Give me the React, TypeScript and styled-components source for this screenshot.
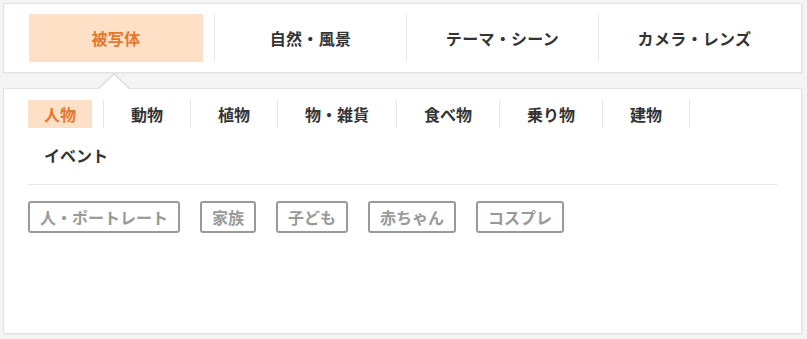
import React from "react";
import styled, { createGlobalStyle } from "styled-components";

const Global = createGlobalStyle`
  html, body { margin: 0; padding: 0; background: #f4f4f4; }
  body { font-family: "Noto Sans CJK JP", "Noto Sans", sans-serif; }
  * { box-sizing: border-box; }
`;

const Page = styled.div`
  padding: 3px 5px 5px 3px;
  display: flex;
  flex-direction: column;
  gap: 15px;
`;

const Panel = styled.div`
  position: relative;
  background: #fff;
  border: 1px solid #e3e3e3;
  box-shadow: 1px 1px 1px rgba(0, 0, 0, 0.04);
`;

const TopPanel = styled(Panel)`
  padding: 10px 25px;
`;

const MainTabs = styled.ul`
  list-style: none;
  margin: 0;
  padding: 0;
  display: flex;
`;

const MainTabItem = styled.li<{ $first?: boolean; $last?: boolean }>`
  padding: 0 ${(p) => (p.$last ? "0" : "11px")} 0 ${(p) => (p.$first ? "0" : "11px")};
  border-right: ${(p) => (p.$last ? "none" : "1px solid #e6e6e6")};
  display: flex;
`;

const MainTab = styled.a<{ $active?: boolean; $w: number }>`
  width: ${(p) => p.$w}px;
  height: 48px;
  display: flex;
  align-items: center;
  justify-content: center;
  font-size: 16px;
  font-weight: 700;
  color: ${(p) => (p.$active ? "#e4782c" : "#333")};
  background: ${(p) => (p.$active ? "#fde0c6" : "transparent")};
  letter-spacing: 0.3px;
`;

const BodyPanel = styled(Panel)`
  height: 246px;
  padding: 11px 23px 0 24px;

  &::before,
  &::after {
    content: "";
    position: absolute;
    width: 0;
    height: 0;
    border-style: solid;
  }
  &::before {
    top: -16px;
    left: 94px;
    border-width: 0 16px 15px 16px;
    border-color: transparent transparent #dcdcdc transparent;
  }
  &::after {
    top: -14px;
    left: 95px;
    border-width: 0 15px 14px 15px;
    border-color: transparent transparent #fff transparent;
  }
`;

const SubTabs = styled.ul`
  list-style: none;
  margin: 0;
  padding: 0;
  display: flex;
  flex-wrap: wrap;
  row-gap: 13px;
  padding-bottom: 15px;
  border-bottom: 1px solid #e6e6e6;
`;

const SubTabItem = styled.li<{ $rowStart?: boolean; $last?: boolean }>`
  padding: 0 11px 0 ${(p) => (p.$rowStart ? "0" : "11px")};
  border-right: ${(p) => (p.$last ? "none" : "1px solid #e6e6e6")};
  display: flex;
`;

const SubTab = styled.a<{ $active?: boolean }>`
  height: 28px;
  padding: 0 16px;
  display: flex;
  align-items: center;
  font-size: 16px;
  font-weight: 700;
  color: ${(p) => (p.$active ? "#e4782c" : "#333")};
  background: ${(p) => (p.$active ? "#fde0c6" : "transparent")};
  white-space: nowrap;
`;

const Tags = styled.div`
  display: flex;
  flex-wrap: wrap;
  gap: 20px;
  padding-top: 16px;
`;

const Tag = styled.a`
  height: 32px;
  padding: 0 10px;
  border: 2px solid #9a9a9a;
  border-radius: 3px;
  display: flex;
  align-items: center;
  font-size: 16px;
  font-weight: 700;
  color: #999;
  white-space: nowrap;
`;

const mainTabs = ["被写体", "自然・風景", "テーマ・シーン", "カメラ・レンズ"];
const subTabs = ["人物", "動物", "植物", "物・雑貨", "食べ物", "乗り物", "建物", "イベント"];
const tags = ["人・ポートレート", "家族", "子ども", "赤ちゃん", "コスプレ"];

export default function App() {
  return (
    <>
      <Global />
      <Page>
        <TopPanel>
          <MainTabs>
            {mainTabs.map((t, i) => (
              <MainTabItem key={t} $first={i === 0} $last={i === mainTabs.length - 1}>
                <MainTab $active={i === 0} $w={i === 0 ? 174 : 169}>
                  {t}
                </MainTab>
              </MainTabItem>
            ))}
          </MainTabs>
        </TopPanel>
        <BodyPanel>
          <SubTabs>
            {subTabs.map((t, i) => (
              <SubTabItem
                key={t}
                $rowStart={i === 0 || i === 7}
                $last={i === subTabs.length - 1}
              >
                <SubTab $active={i === 0}>{t}</SubTab>
              </SubTabItem>
            ))}
          </SubTabs>
          <Tags>
            {tags.map((t) => (
              <Tag key={t}>{t}</Tag>
            ))}
          </Tags>
        </BodyPanel>
      </Page>
    </>
  );
}
